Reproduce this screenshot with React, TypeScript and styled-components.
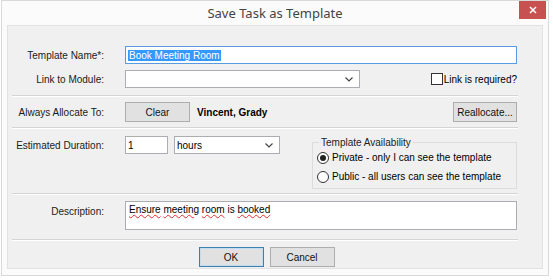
import styled, { createGlobalStyle } from 'styled-components'

const GlobalStyle = createGlobalStyle`
  html, body {
    margin: 0;
    padding: 0;
    background: #ffffff;
  }
  body {
    font-family: 'Liberation Sans', Arial, sans-serif;
    font-size: 10px;
    color: #000;
  }
`

const Window = styled.div`
  width: 548px;
  height: 276px;
  margin-left: 1px;
  box-sizing: border-box;
  border: 1px solid #d9d9d9;
  background: #fbfbfb;
  display: flex;
  flex-direction: column;
  padding: 0 5px 6px 5px;
`
const TitleBar = styled.div`
  height: 24px;
  display: flex;
  align-items: center;
  justify-content: center;
  position: relative;
  font-family: 'Noto Sans', 'Open Sans', sans-serif;
  font-size: 13px;
  color: #444;
`
const CloseButton = styled.div`
  position: absolute;
  right: -3px;
  top: 0;
  width: 27px;
  height: 18px;
  background: #c75050;
  color: #fff;
  display: flex;
  align-items: center;
  justify-content: center;
`
const Panel = styled.div`
  flex: 1;
  background: #f0f0f0;
  border: 1px solid #e2e2e2;
  padding: 20px 25px 0 4px;
  display: flex;
  flex-direction: column;
`
const Row = styled.div<{ $h: number; $mt?: number }>`
  display: grid;
  grid-template-columns: 92px 1fr;
  column-gap: 21px;
  align-items: center;
  height: ${(p) => p.$h}px;
  margin-top: ${(p) => p.$mt ?? 0}px;
`
const TopRow = styled(Row)`
  align-items: start;
`
const Label = styled.div<{ $mt?: number }>`
  text-align: right;
  white-space: nowrap;
  color: #1a1a1a;
  margin-top: ${(p) => p.$mt ?? 0}px;
`
const Content = styled.div<{ $top?: boolean }>`
  display: flex;
  align-items: ${(p) => (p.$top ? 'flex-start' : 'center')};
  min-width: 0;
  white-space: nowrap;
`
const TextBox = styled.div<{ $w?: number; $focused?: boolean }>`
  box-sizing: border-box;
  height: 18px;
  width: ${(p) => (p.$w ? `${p.$w}px` : '100%')};
  flex: ${(p) => (p.$w ? 'none' : '1')};
  background: #fff;
  border: 1px solid ${(p) => (p.$focused ? '#5a9be0' : '#abadb3')};
  display: flex;
  align-items: center;
  padding-left: 2px;
`
const Selected = styled.span`
  background: #3399ff;
  color: #fff;
  padding: 0 1px;
`
const Select = styled(TextBox)<{ $ml?: number }>`
  justify-content: space-between;
  padding-right: 6px;
  margin-left: ${(p) => p.$ml ?? 0}px;
`
const Chevron = () => (
  <svg width="8" height="5" viewBox="0 0 8 5">
    <path d="M0.5 0.5 L4 4 L7.5 0.5" stroke="#444" strokeWidth="1.2" fill="none" />
  </svg>
)
const CheckWrap = styled.label`
  margin-left: auto;
  display: flex;
  align-items: center;
  gap: 1px;
`
const CheckBox = styled.span`
  width: 12px;
  height: 12px;
  border: 1px solid #333;
  background: #fff;
  box-sizing: border-box;
`
const Separator = styled.div<{ $mt: number }>`
  margin-top: ${(p) => p.$mt}px;
  height: 1px;
  background: #d4d4d4;
  border-bottom: 1px solid #fff;
  margin-right: -1px;
`
const Button = styled.div<{ $w?: number; $default?: boolean }>`
  box-sizing: border-box;
  width: ${(p) => p.$w ?? 65}px;
  height: 20px;
  border: 1px solid ${(p) => (p.$default ? '#3c7fb1' : '#adadad')};
  background: #e1e1e1;
  display: flex;
  align-items: center;
  justify-content: center;
  color: #111;
  box-shadow: ${(p) => (p.$default ? 'inset 0 0 0 1px #c4dcf0' : 'none')};
`
const Name = styled.span`
  font-weight: bold;
  margin-left: 7px;
`
const Reallocate = styled(Button)`
  margin-left: auto;
`
const Group = styled.fieldset`
  margin: 1px 0 0 32px;
  padding: 0 0 2px 4px;
  border: 1px solid #dcdcdc;
  height: 52px;
  box-sizing: border-box;
  flex: 1;
  display: flex;
  flex-direction: column;
  justify-content: space-around;
`
const Legend = styled.legend`
  padding: 0 2px;
  margin-left: 2px;
  color: #222;
`
const Radio = styled.div`
  display: flex;
  align-items: center;
  gap: 3px;
`
const RadioDot = styled.span<{ $on?: boolean }>`
  width: 12px;
  height: 12px;
  border-radius: 50%;
  border: 1px solid #333;
  background: #fff;
  box-sizing: border-box;
  display: flex;
  align-items: center;
  justify-content: center;
  &::after {
    content: '';
    width: 6px;
    height: 6px;
    border-radius: 50%;
    background: ${(p) => (p.$on ? '#222' : 'transparent')};
  }
`
const TextArea = styled.div`
  box-sizing: border-box;
  height: 29px;
  flex: 1;
  background: #fff;
  border: 1px solid #abadb3;
  padding: 2px 3px;
`
const Misspelled = styled.span`
  text-decoration: underline wavy #e03030;
  text-decoration-thickness: 1px;
`
const Footer = styled.div`
  display: flex;
  justify-content: center;
  gap: 6px;
  margin-top: 6px;
  padding-left: 4px;
`

export default function App() {
  return (
    <>
      <GlobalStyle />
      <Window>
        <TitleBar>
          Save Task as Template
          <CloseButton>
            <svg width="8" height="8" viewBox="0 0 8 8">
              <path d="M1 1 L7 7 M7 1 L1 7" stroke="#fff" strokeWidth="1.5" />
            </svg>
          </CloseButton>
        </TitleBar>
        <Panel>
          <Row $h={18}>
            <Label>Template Name*:</Label>
            <Content>
              <TextBox $focused>
                <Selected>Book Meeting Room</Selected>
              </TextBox>
            </Content>
          </Row>
          <Row $h={18} $mt={6}>
            <Label>Link to Module:</Label>
            <Content>
              <Select $w={235}>
                <span />
                <Chevron />
              </Select>
              <CheckWrap>
                <CheckBox />
                Link is required?
              </CheckWrap>
            </Content>
          </Row>
          <Separator $mt={7} />
          <Row $h={20} $mt={5}>
            <Label>Always Allocate To:</Label>
            <Content>
              <Button>Clear</Button>
              <Name>Vincent, Grady</Name>
              <Reallocate $w={64}>Reallocate...</Reallocate>
            </Content>
          </Row>
          <Separator $mt={5} />
          <TopRow $h={57} $mt={7}>
            <Label $mt={4}>Estimated Duration:</Label>
            <Content $top>
              <TextBox $w={43}>1</TextBox>
              <Select $w={106} $ml={6}>
                hours
                <Chevron />
              </Select>
              <Group>
                <Legend>Template Availability</Legend>
                <Radio>
                  <RadioDot $on />
                  Private - only I can see the template
                </Radio>
                <Radio>
                  <RadioDot />
                  Public - all users can see the template
                </Radio>
              </Group>
            </Content>
          </TopRow>
          <Separator $mt={0} />
          <TopRow $h={29} $mt={6}>
            <Label $mt={5}>Description:</Label>
            <Content>
              <TextArea>
                <Misspelled>Ensure</Misspelled> <Misspelled>meeting</Misspelled>{' '}
                <Misspelled>room</Misspelled> is <Misspelled>booked</Misspelled>
              </TextArea>
            </Content>
          </TopRow>
          <Separator $mt={9} />
          <Footer>
            <Button $default>OK</Button>
            <Button>Cancel</Button>
          </Footer>
        </Panel>
      </Window>
    </>
  )
}
